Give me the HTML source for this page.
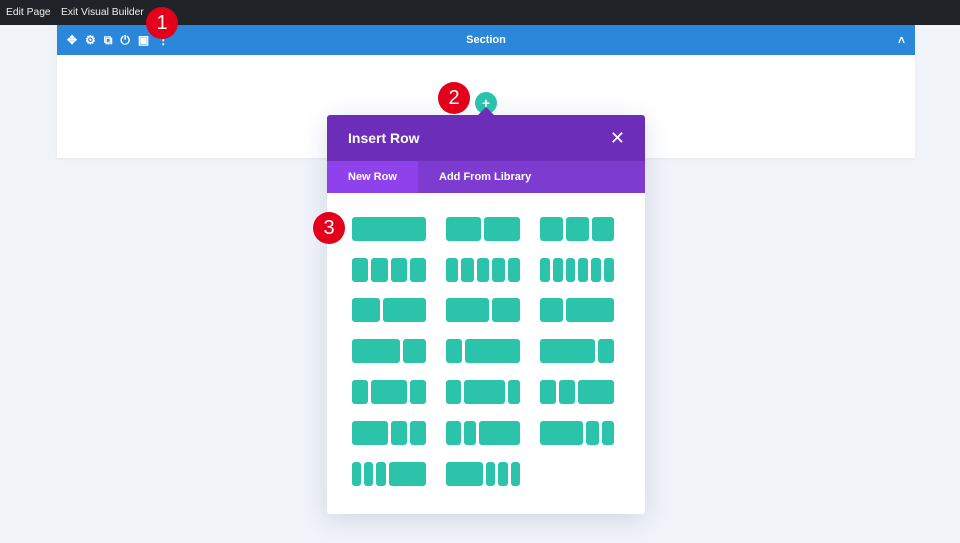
<!DOCTYPE html><html><head><style>
*{margin:0;padding:0;box-sizing:border-box}
body{width:960px;height:543px;background:#f0f3f8;font-family:"Liberation Sans",sans-serif;position:relative;overflow:hidden}
.top{position:absolute;left:0;top:0;width:960px;height:25px;background:#1f2327;color:#eee;font-size:10.3px;line-height:25px}
.top span{position:absolute}
.sec{position:absolute;left:57px;top:25px;width:858px;height:133px;background:#fff;box-shadow:0 1px 3px rgba(0,0,0,.05)}
.sh{height:30px;background:#2b87da;color:#fff;font-size:11px;font-weight:bold;text-align:center;line-height:30px;position:relative}
.badge{position:absolute;width:32px;height:32px;border-radius:50%;background:#e3001b;color:#fff;font-size:20px;text-align:center;line-height:32px}
.modal{position:absolute;left:327px;top:115px;width:318px;height:399px;background:#fff;box-shadow:0 5px 25px rgba(80,100,160,.2);border-radius:3px;overflow:hidden}
.mh{height:46px;background:#6c2eb9;color:#fff;font-size:14px;font-weight:bold;line-height:46px;padding-left:21px;position:relative}
.tabs{height:32px;background:#7e3bd0;color:#fff;font-size:11px;font-weight:bold;line-height:32px;position:relative}
.row{position:absolute;display:flex;gap:3px;width:74px;height:24px}
.row i{background:#2bc4ab;border-radius:3px;display:block}
.plus{position:absolute;left:475px;top:92px;width:22px;height:22px;border-radius:50%;background:#2bc4ab;color:#fff;text-align:center;line-height:22px;font-size:14px;font-weight:bold}
.tri{position:absolute;left:478px;top:107px;width:0;height:0;border-left:8px solid transparent;border-right:8px solid transparent;border-bottom:8px solid #6c2eb9}
</style></head><body>
<div class="top"><span style="left:6px">Edit Page</span><span style="left:61px">Exit Visual Builder</span></div>
<div class="sec"><div class="sh">
<span style="position:absolute;left:10px;top:0;font-size:12px;letter-spacing:8px">✥⚙⧉⏻▣⋮</span>Section<span style="position:absolute;right:10px;font-size:12px">˄</span></div></div>
<div class="plus">+</div>
<div class="tri"></div>
<div class="modal">
<div class="mh">Insert Row<span style="position:absolute;right:20px;font-size:18px;font-weight:normal">✕</span></div>
<div class="tabs"><span style="position:absolute;left:0;width:91px;height:32px;background:#8f42ec"></span><span style="position:absolute;left:21px">New Row</span><span style="position:absolute;left:112px">Add From Library</span></div>
</div>
<div id="g"></div>
<div class="badge" style="left:146px;top:7px">1</div>
<div class="badge" style="left:438px;top:82px">2</div>
<div class="badge" style="left:313px;top:212px">3</div>
<script>
var R=[[[1],[103,107],[68,66,66]],[[1,1,1,1],[1,1,1,1,1],[1,1,1,1,1,1]],[[83,127],[128,83],[68,143]],[[142,67],[47,163],[163,47]],[[47,103,47],[47,125,37],[47,47,103]],[[104,47,48],[47,37,128],[127,37,35]],[[26,26,28,106],[107,28,27,27]]];
var Y=[217,258,298,339,380,421,462],X=[352,446,540],h='';
R.forEach(function(r,i){r.forEach(function(c,j){h+='<div class="row" style="left:'+X[j]+'px;top:'+Y[i]+'px">';c.forEach(function(f){h+='<i style="flex:'+f+' 1 0"></i>'});h+='</div>'})});
document.getElementById('g').innerHTML=h;
</script>
</body></html>
